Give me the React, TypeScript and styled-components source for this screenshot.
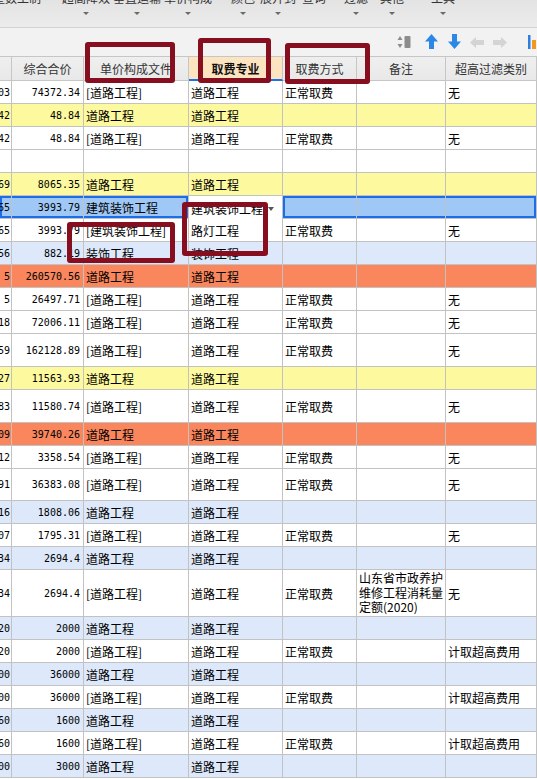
import React from 'react';
import styled, { createGlobalStyle } from 'styled-components';

const Global = createGlobalStyle`
  html, body { margin: 0; padding: 0; background: #fff; }
  body { font-family: "Noto Sans CJK SC", "Noto Sans", sans-serif; }
`;

const Page = styled.div`
  position: relative;
  width: 537px;
  height: 779px;
  overflow: hidden;
  background: #fff;
`;

const Ribbon = styled.div`
  height: 28px;
  box-sizing: border-box;
  border-bottom: 1px solid #d2d2d2;
  background: linear-gradient(#e3e3e3, #ececec);
  display: flex;
  overflow: hidden;
`;

const Group = styled.div<{ $w: number; $ml: number }>`
  flex: none;
  width: ${(p) => p.$w}px;
  margin-left: ${(p) => p.$ml}px;
  display: flex;
  flex-direction: column;
  align-items: center;
`;

const GroupLabel = styled.div<{ $shift?: number }>`
  margin-top: -10px;
  margin-left: ${(p) => p.$shift ?? 0}px;
  font-size: 12px;
  line-height: 16px;
  color: #333;
  white-space: nowrap;
`;

const Caret = styled.div<{ $hide?: boolean }>`
  margin-top: 6px;
  width: 0;
  height: 0;
  border-left: 3px solid transparent;
  border-right: 3px solid transparent;
  border-top: 3px solid ${(p) => (p.$hide ? 'transparent' : '#6a6a6a')};
`;

const Toolbar = styled.div`
  height: 28px;
  box-sizing: border-box;
  background: #f2f2f2;
  display: flex;
  align-items: center;
  padding-left: 397px;
  overflow: hidden;
`;

const Tool = styled.div<{ $ml: number; $w: number }>`
  flex: none;
  width: ${(p) => p.$w}px;
  height: 16px;
  margin-left: ${(p) => p.$ml}px;
  display: flex;
  align-items: center;
  justify-content: center;
`;

const COLS = '12px 72px 105px 94px 74px 89px 91px';

const HeaderRow = styled.div`
  display: grid;
  grid-template-columns: ${COLS};
  height: 25px;
  box-sizing: border-box;
  border-top: 1px solid #c6c6c6;
  background: linear-gradient(#efefef, #e8e8e8);
`;

const HeadCell = styled.div<{ $active?: boolean }>`
  box-sizing: border-box;
  border-right: 1px solid #c6c6c6;
  border-bottom: ${(p) => (p.$active ? '2px solid #1f6fe6' : '1px solid #c6c6c6')};
  background: ${(p) => (p.$active ? '#fde4c0' : 'transparent')};
  display: flex;
  align-items: center;
  justify-content: center;
  font-size: 12px;
  font-weight: ${(p) => (p.$active ? 700 : 400)};
  color: ${(p) => (p.$active ? '#111' : '#333')};
  white-space: nowrap;
  overflow: hidden;
`;

type Bg = 'w' | 'y' | 'o' | 'b' | 's';
const BG: Record<Bg, string> = {
  w: '#ffffff',
  y: '#fdf99e',
  o: '#f9865d',
  b: '#dde9fb',
  s: '#9fc8f6',
};

const Row = styled.div<{ $bg: Bg; $h: number }>`
  display: grid;
  grid-template-columns: ${COLS};
  height: ${(p) => p.$h}px;
  background: ${(p) => BG[p.$bg]};
`;

type Frame = '' | 'l' | 'm' | 'r' | 'ml';
const frameShadow = (f: Frame) => {
  if (!f) return 'none';
  const s = ['inset 0 2px 0 #1c6de9', 'inset 0 -2px 0 #1c6de9'];
  if (f === 'l' || f === 'ml') s.push('inset 2px 0 0 #1c6de9');
  if (f === 'r') s.push('inset -2px 0 0 #1c6de9');
  return s.join(', ');
};

const Cell = styled.div<{ $align?: 'left' | 'right'; $num?: boolean; $frame?: Frame; $clip?: boolean }>`
  box-sizing: border-box;
  border-right: 1px solid #c2c2c2;
  border-bottom: 1px solid #c2c2c2;
  display: flex;
  align-items: center;
  justify-content: ${(p) => (p.$align === 'right' ? 'flex-end' : 'flex-start')};
  padding: ${(p) => (p.$align === 'right' ? (p.$clip ? '0 1px 0 0' : '0 3px 0 0') : '0 0 0 2px')};
  overflow: hidden;
  white-space: nowrap;
  font-family: ${(p) =>
    p.$num ? '"DejaVu Sans Mono", "Liberation Mono", monospace' : '"Noto Sans CJK SC", "Noto Sans", sans-serif'};
  font-size: ${(p) => (p.$num ? '10px' : '12px')};
  color: #000;
  box-shadow: ${(p) => frameShadow(p.$frame ?? '')};
  & > span { flex: none; }
`;

const NoteText = styled.div`
  white-space: normal;
  font-size: 12px;
  line-height: 14.5px;
  word-break: break-all;
`;

const Editor = styled.div`
  box-sizing: border-box;
  border-right: 1px solid #c2c2c2;
  background: #fff;
  display: flex;
  align-items: center;
  justify-content: space-between;
  padding: 2px 8px 0 2px;
  font-size: 12px;
  color: #000;
  white-space: nowrap;
  overflow: hidden;
`;

const EditorCaret = styled.span`
  width: 0;
  height: 0;
  border-left: 3px solid transparent;
  border-right: 3px solid transparent;
  border-top: 4px solid #555;
`;

const Mark = styled.div<{ $x: number; $y: number; $w: number; $h: number }>`
  position: absolute;
  left: ${(p) => p.$x}px;
  top: ${(p) => p.$y}px;
  width: ${(p) => p.$w}px;
  height: ${(p) => p.$h}px;
  box-sizing: border-box;
  border: 5px solid #860e1e;
  border-radius: 3px;
  pointer-events: none;
`;

type RowData = {
  a: string;
  p: string;
  f: string;
  z: string;
  m?: string;
  n?: string;
  x?: string;
  bg: Bg;
  h?: number;
  sel?: boolean;
};

const R = '道路工程';
const RB = '[道路工程]';
const N = '正常取费';
const J = '计取超高费用';

const rows: RowData[] = [
  { a: '1.03', p: '74372.34', f: RB, z: R, m: N, x: '无', bg: 'w' },
  { a: '0.42', p: '48.84', f: R, z: R, bg: 'y' },
  { a: '0.42', p: '48.84', f: RB, z: R, m: N, x: '无', bg: 'w' },
  { a: '', p: '', f: '', z: '', bg: 'w' },
  { a: '1.69', p: '8065.35', f: R, z: R, bg: 'y' },
  { a: '2.65', p: '3993.79', f: '建筑装饰工程', z: '建筑装饰工程', bg: 's', sel: true },
  { a: '2.65', p: '3993.79', f: '[建筑装饰工程]', z: '路灯工程', m: N, x: '无', bg: 'w' },
  { a: '0.56', p: '882.19', f: '装饰工程', z: '装饰工程', bg: 'b' },
  { a: '5', p: '260570.56', f: R, z: R, bg: 'o' },
  { a: '5', p: '26497.71', f: RB, z: R, m: N, x: '无', bg: 'w' },
  { a: '1.18', p: '72006.11', f: RB, z: R, m: N, x: '无', bg: 'w' },
  { a: '1.59', p: '162128.89', f: RB, z: R, m: N, x: '无', bg: 'w', h: 33 },
  { a: '3.27', p: '11563.93', f: R, z: R, bg: 'y' },
  { a: '3.83', p: '11580.74', f: RB, z: R, m: N, x: '无', bg: 'w', h: 33 },
  { a: '1.09', p: '39740.26', f: R, z: R, bg: 'o' },
  { a: '1.12', p: '3358.54', f: RB, z: R, m: N, x: '无', bg: 'w' },
  { a: '1.91', p: '36383.08', f: RB, z: R, m: N, x: '无', bg: 'w', h: 32 },
  { a: '1.16', p: '1808.06', f: R, z: R, bg: 'b' },
  { a: '1.07', p: '1795.31', f: RB, z: R, m: N, x: '无', bg: 'w' },
  { a: '1.34', p: '2694.4', f: R, z: R, bg: 'b' },
  {
    a: '1.34',
    p: '2694.4',
    f: RB,
    z: R,
    m: N,
    n: '山东省市政养护维修工程消耗量定额(2020)',
    x: '无',
    bg: 'w',
    h: 47,
  },
  { a: '1.20', p: '2000', f: R, z: R, bg: 'b' },
  { a: '1.20', p: '2000', f: RB, z: R, m: N, x: J, bg: 'w' },
  { a: '1.00', p: '36000', f: R, z: R, bg: 'b' },
  { a: '1.00', p: '36000', f: RB, z: R, m: N, x: J, bg: 'w' },
  { a: '1.60', p: '1600', f: R, z: R, bg: 'b' },
  { a: '1.60', p: '1600', f: RB, z: R, m: N, x: J, bg: 'w' },
  { a: '1.00', p: '3000', f: R, z: R, bg: 'b' },
];

const groups = [
  { label: '整数工制', w: 48, ml: 0, arrow: false, shift: -14 },
  { label: '超高降效', w: 48, ml: 14, arrow: true },
  { label: '垂直运输', w: 50, ml: 2, arrow: true },
  { label: '单价构成', w: 50, ml: 1, arrow: true },
  { label: '颜色', w: 34, ml: 13, arrow: true },
  { label: '展开到', w: 36, ml: 0, arrow: true },
  { label: '查询', w: 30, ml: 3, arrow: false },
  { label: '过滤', w: 30, ml: 12, arrow: true },
  { label: '其他', w: 30, ml: 6, arrow: true },
  { label: '工具', w: 30, ml: 21, arrow: true },
];

const SortIcon = () => (
  <svg width="14" height="14" viewBox="0 0 14 14">
    <path d="M3 1 L5.5 5 L0.5 5 Z" fill="#8c8c8c" />
    <path d="M3 13 L5.5 9 L0.5 9 Z" fill="#8c8c8c" />
    <rect x="7.5" y="1" width="6" height="12" rx="1" fill="#8c8c8c" />
  </svg>
);

const ArrowUp = ({ c }: { c: string }) => (
  <svg width="13" height="16" viewBox="0 0 13 16">
    <path d="M6.5 0 L13 7.5 L9 7.5 L9 15 L4 15 L4 7.5 L0 7.5 Z" fill={c} />
  </svg>
);

const ArrowDown = ({ c }: { c: string }) => (
  <svg width="13" height="16" viewBox="0 0 13 16">
    <path d="M6.5 15 L13 7.5 L9 7.5 L9 0 L4 0 L4 7.5 L0 7.5 Z" fill={c} />
  </svg>
);

const ArrowLeft = ({ c }: { c: string }) => (
  <svg width="14" height="11" viewBox="0 0 14 11">
    <path d="M0 5.5 L6 0 L6 3 L14 3 L14 8 L6 8 L6 11 Z" fill={c} />
  </svg>
);

const ArrowRight = ({ c }: { c: string }) => (
  <svg width="14" height="11" viewBox="0 0 14 11">
    <path d="M14 5.5 L8 0 L8 3 L0 3 L0 8 L8 8 L8 11 Z" fill={c} />
  </svg>
);

const ColorIcon = () => (
  <svg width="14" height="14" viewBox="0 0 14 14">
    <rect x="0" y="0" width="2.5" height="14" fill="#2b7fe0" />
    <rect x="4" y="5" width="4" height="9" fill="#f39a1e" />
    <rect x="9" y="9" width="4" height="5" fill="#f39a1e" />
  </svg>
);

export default function App() {
  return (
    <Page>
      <Global />
      <Ribbon>
        {groups.map((g) => (
          <Group key={g.label} $w={g.w} $ml={g.ml}>
            <GroupLabel $shift={g.shift}>{g.label}</GroupLabel>
            <Caret $hide={!g.arrow} />
          </Group>
        ))}
      </Ribbon>
      <Toolbar>
        <Tool $ml={0} $w={14}>
          <SortIcon />
        </Tool>
        <Tool $ml={14} $w={13}>
          <ArrowUp c="#2c88e6" />
        </Tool>
        <Tool $ml={10} $w={13}>
          <ArrowDown c="#2c88e6" />
        </Tool>
        <Tool $ml={9} $w={14}>
          <ArrowLeft c="#d4d4d4" />
        </Tool>
        <Tool $ml={9} $w={14}>
          <ArrowRight c="#d4d4d4" />
        </Tool>
        <Tool $ml={21} $w={14}>
          <ColorIcon />
        </Tool>
      </Toolbar>
      <HeaderRow>
        <HeadCell />
        <HeadCell>综合合价</HeadCell>
        <HeadCell>单价构成文件</HeadCell>
        <HeadCell $active>取费专业</HeadCell>
        <HeadCell>取费方式</HeadCell>
        <HeadCell>备注</HeadCell>
        <HeadCell>超高过滤类别</HeadCell>
      </HeaderRow>
      {rows.map((r, i) => (
        <Row key={i} $bg={r.bg} $h={r.h ?? 23}>
          <Cell $align="right" $num $clip $frame={r.sel ? 'l' : ''}>
            <span>{r.a}</span>
          </Cell>
          <Cell $align="right" $num $frame={r.sel ? 'm' : ''}>
            <span>{r.p}</span>
          </Cell>
          <Cell $frame={r.sel ? 'r' : ''}>{r.f}</Cell>
          {r.sel ? (
            <Editor>
              <span>{r.z}</span>
              <EditorCaret />
            </Editor>
          ) : (
            <Cell>{r.z}</Cell>
          )}
          <Cell $frame={r.sel ? 'ml' : ''}>{r.m}</Cell>
          <Cell $frame={r.sel ? 'm' : ''}>{r.n ? <NoteText>{r.n}</NoteText> : null}</Cell>
          <Cell $frame={r.sel ? 'r' : ''}>{r.x}</Cell>
        </Row>
      ))}
      <Mark $x={85} $y={42} $w={90} $h={41} />
      <Mark $x={198} $y={38} $w={73} $h={45} />
      <Mark $x={285} $y={43} $w={85} $h={41} />
      <Mark $x={67} $y={222} $w={108} $h={41} />
      <Mark $x={182} $y={202} $w={86} $h={54} />
    </Page>
  );
}
